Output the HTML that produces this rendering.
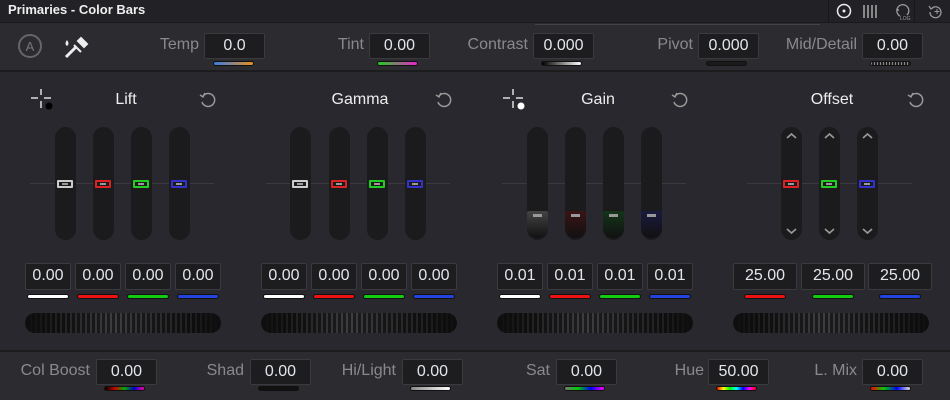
<!DOCTYPE html>
<html><head><meta charset="utf-8"><style>
*{margin:0;padding:0;box-sizing:border-box}
body{width:950px;height:400px;background:#28282e;font-family:"Liberation Sans",sans-serif;position:relative;overflow:hidden;color:#ddd}
.a{position:absolute}
.box{position:absolute;background:#1d1d20;border:1px solid #3a3a3f;border-radius:2px;color:#e2e6ea;font-size:16px;text-align:center;line-height:24px}
.lbl{position:absolute;color:#8a8a8e;font-size:16px;line-height:24px;text-align:right;top:1px}
.bar{position:absolute;height:5px;border-radius:3px;border:1px solid #111}
.tr{position:absolute;width:21px;top:127px;height:113px;border-radius:11px;background:#1b1b1d}
.h{position:absolute;width:16px;height:8px;border:2px solid;border-radius:1px;background:#1b1b1d}
.h::after{content:"";position:absolute;left:3px;top:1px;width:6px;height:2px;background:#999}
.title{position:absolute;color:#eee;font-size:16px;line-height:20px;text-align:center}
.wheel{position:absolute;height:20px;border-radius:10px;background:repeating-linear-gradient(90deg,#3e3e40 0 2px,#1c1c1e 2px 5px);top:313px}
.wheel::after{content:"";position:absolute;inset:0;border-radius:10px;background:linear-gradient(90deg,#0e0e0e 0%,rgba(0,0,0,.5) 15%,rgba(0,0,0,0) 45%,rgba(0,0,0,.5) 85%,#0e0e0e 100%)}
</style></head><body>
<div class="a" style="left:0;top:0;width:950px;height:23px;background:#222226;border-bottom:1px solid #1a1a1c"></div>
<div class="a" style="left:8px;top:2px;font-size:13px;font-weight:bold;color:#eee">Primaries - Color Bars</div>
<div class="a" style="left:828px;top:0;width:1px;height:23px;background:#18181a"></div>
<div class="a" style="left:914px;top:0;width:1px;height:23px;background:#18181a"></div>
<svg class="a" style="left:828px;top:0" width="122" height="23">
<circle cx="16" cy="11" r="6.5" fill="none" stroke="#eee" stroke-width="1.5"/><circle cx="16" cy="11" r="1.5" fill="#eee"/>
<g stroke="#aaa" stroke-width="1.5"><line x1="36" y1="5" x2="36" y2="18"/><line x1="40" y1="5" x2="40" y2="18"/><line x1="44" y1="5" x2="44" y2="18"/><line x1="48" y1="5" x2="48" y2="18"/></g>
<path d="M72 16 A6 6 0 1 1 79 15" fill="none" stroke="#999" stroke-width="1.3"/><circle cx="70" cy="10" r="1" fill="#999"/><text x="72" y="20" font-size="5" fill="#999" font-family="Liberation Sans">LOG</text>
<path d="M104 8 A5.5 5.5 0 1 1 102 12" fill="none" stroke="#999" stroke-width="1.3"/><path d="M101 6 L103 9 L106 7" fill="none" stroke="#999" stroke-width="1.2"/><line x1="109" y1="9" x2="109" y2="14" stroke="#999"/><line x1="106.5" y1="11.5" x2="111.5" y2="11.5" stroke="#999"/>
</svg>
<div class="a" style="left:0;top:23px;width:950px;height:49px;background:#2b2b30;border-bottom:2px solid #1c1c1f"></div>
<div class="a" style="left:535px;top:24px;width:285px;height:1px;background:#444"></div>
<svg class="a" style="left:14px;top:32px" width="80" height="30">
<circle cx="16" cy="14" r="11" fill="none" stroke="#666" stroke-width="2"/><text x="16" y="19" text-anchor="middle" font-size="13" fill="#777" font-family="Liberation Sans">A</text>
<path d="M52 25 L62 15" stroke="#eee" stroke-width="3" fill="none"/><path d="M60 13 L67 20 M64 9 L70 15 L73 12 L67 6 Z" stroke="#eee" stroke-width="2" fill="#eee"/><path d="M53 8 Q50 12 53 14 Q56 12 53 8 Z" fill="#eee"/>
</svg>
<div class="lbl" style="left:100px;top:33px;width:99px">Temp</div><div class="box" style="left:204px;top:33px;width:61px;height:26px">0.0</div><div class="bar" style="left:213px;top:61px;width:41px;background:linear-gradient(90deg,#3a7be0,#e89020)"></div>
<div class="lbl" style="left:260px;top:33px;width:104px">Tint</div><div class="box" style="left:369px;top:33px;width:61px;height:26px">0.00</div><div class="bar" style="left:377px;top:61px;width:41px;background:linear-gradient(90deg,#2c2,#e2c)"></div>
<div class="lbl" style="left:420px;top:33px;width:108px">Contrast</div><div class="box" style="left:533px;top:33px;width:61px;height:26px">0.000</div><div class="bar" style="left:541px;top:61px;width:41px;background:linear-gradient(90deg,#000,#fff)"></div>
<div class="lbl" style="left:600px;top:33px;width:93px">Pivot</div><div class="box" style="left:698px;top:33px;width:61px;height:26px">0.000</div><div class="bar" style="left:706px;top:61px;width:41px;background:#1a1a1a"></div>
<div class="lbl" style="left:760px;top:33px;width:97px">Mid/Detail</div><div class="box" style="left:862px;top:33px;width:61px;height:26px">0.00</div><div class="bar" style="left:870px;top:61px;width:41px;background:repeating-linear-gradient(90deg,#888 0 1px,#222 1px 3px)"></div>
<div class="a" style="left:0;top:350px;width:950px;height:2px;background:#1c1c1f"></div>
<div class="a" style="left:0;top:352px;width:950px;height:48px;background:#2b2b30"></div>
<div class="lbl" style="left:0;top:359px;width:90px">Col Boost</div><div class="box" style="left:96px;top:359px;width:61px;height:26px">0.00</div><div class="bar" style="left:104px;top:386px;width:41px;background:linear-gradient(90deg,#000,#c00,#0a0,#00c,#f0a)"></div>
<div class="lbl" style="left:160px;top:359px;width:84px">Shad</div><div class="box" style="left:250px;top:359px;width:61px;height:26px">0.00</div><div class="bar" style="left:258px;top:386px;width:41px;background:#111"></div>
<div class="lbl" style="left:300px;top:359px;width:96px">Hi/Light</div><div class="box" style="left:402px;top:359px;width:61px;height:26px">0.00</div><div class="bar" style="left:410px;top:386px;width:41px;background:linear-gradient(90deg,#888,#fff)"></div>
<div class="lbl" style="left:480px;top:359px;width:70px">Sat</div><div class="box" style="left:556px;top:359px;width:61px;height:26px">0.00</div><div class="bar" style="left:564px;top:386px;width:41px;background:linear-gradient(90deg,#777,#0c0,#00f,#f0f)"></div>
<div class="lbl" style="left:620px;top:359px;width:84px">Hue</div><div class="box" style="left:708px;top:359px;width:61px;height:26px">50.00</div><div class="bar" style="left:716px;top:386px;width:41px;background:linear-gradient(90deg,red,#ff0,#0f0,#0ff,#00f,#f0f,red)"></div>
<div class="lbl" style="left:780px;top:359px;width:77px">L. Mix</div><div class="box" style="left:862px;top:359px;width:61px;height:26px">0.00</div><div class="bar" style="left:870px;top:386px;width:41px;background:linear-gradient(90deg,red,#0c0,#00f,#ddd)"></div>
<div id="m"></div>
<script>
var h='';
var g=[{n:'Lift',x:0,v:'0.00',dot:'#000'},{n:'Gamma',x:236,v:'0.00'},{n:'Gain',x:472,v:'0.01',dot:'#fff'}];
var cols=['#ccc','#d22','#2c2','#33c'];
var bc=['#fff','#e11','#1c1','#24d'];
var gb=['#444','#3a1416','#14351a','#1a1a40'];
g.forEach(function(o,i){
var X=o.x;
var cx=[126,360,598][i];
h+='<div class="title" style="left:'+(cx-50)+'px;top:90px;width:100px">'+o.n+'</div>';
h+='<svg class="a" style="left:'+(X+198)+'px;top:90px" width="20" height="20"><path d="M5 6 A6.5 6.5 0 1 1 4 12" fill="none" stroke="#999" stroke-width="1.5"/><path d="M2 5 L5 7 L7 3" fill="none" stroke="#999" stroke-width="1.4"/></svg>';
if(o.dot)h+='<svg class="a" style="left:'+(X+30)+'px;top:88px" width="26" height="26"><path d="M11 1V20M1 10H21" stroke="#ddd" stroke-width="1.5"/><rect x="8" y="7" width="6" height="6" fill="#28282e"/><circle cx="19" cy="18" r="4" fill="'+o.dot+'" stroke="#28282e"/></svg>';
h+='<div class="a" style="left:'+(X+30)+'px;top:183px;width:184px;height:1px;background:#3a3a3e"></div>';
for(var k=0;k<4;k++){
var tx=[[55,93,131,169],[290,329,367,405],[527,565,603,641]][i][k];
h+='<div class="tr" style="left:'+tx+'px"></div>';
if(i==2){h+='<div class="a" style="left:'+(tx)+'px;top:211px;width:21px;height:27px;border-radius:2px 2px 10px 10px;background:linear-gradient('+gb[k]+',#111)"></div><div class="a" style="left:'+(tx+6)+'px;top:214px;width:9px;height:3px;background:#999"></div>';}
else h+='<div class="h" style="left:'+(tx+2)+'px;top:180px;border-color:'+cols[k]+'"></div>';
var bx=X+[25,75,125,175][k];
h+='<div class="box" style="left:'+bx+'px;top:263px;width:46px;height:27px">'+o.v+'</div>';
h+='<div class="bar" style="left:'+(bx+2)+'px;top:294px;width:42px;background:'+bc[k]+'"></div>';
}
h+='<div class="wheel" style="left:'+(X+25)+'px;width:196px"></div>';
});
h+='<div class="title" style="left:782px;top:90px;width:100px">Offset</div>';
h+='<svg class="a" style="left:906px;top:90px" width="20" height="20"><path d="M5 6 A6.5 6.5 0 1 1 4 12" fill="none" stroke="#999" stroke-width="1.5"/><path d="M2 5 L5 7 L7 3" fill="none" stroke="#999" stroke-width="1.4"/></svg>';
h+='<div class="a" style="left:747px;top:183px;width:165px;height:1px;background:#3a3a3e"></div>';
[781,819,857].forEach(function(tx,k){
h+='<div class="tr" style="left:'+tx+'px"></div>';
h+='<svg class="a" style="left:'+tx+'px;top:127px" width="21" height="113"><path d="M6 11 L10.5 7 L15 11 M6 102 L10.5 106 L15 102" fill="none" stroke="#999" stroke-width="1.6"/></svg>';
h+='<div class="h" style="left:'+(tx+2)+'px;top:180px;border-color:'+cols[k+1]+'"></div>';
var bx=[733,801,868][k];
h+='<div class="box" style="left:'+bx+'px;top:263px;width:64px;height:27px">25.00</div>';
h+='<div class="bar" style="left:'+(bx+11)+'px;top:294px;width:42px;background:'+bc[k+1]+'"></div>';
});
h+='<div class="wheel" style="left:733px;width:196px"></div>';
document.getElementById('m').innerHTML=h;
</script>
</body></html>
